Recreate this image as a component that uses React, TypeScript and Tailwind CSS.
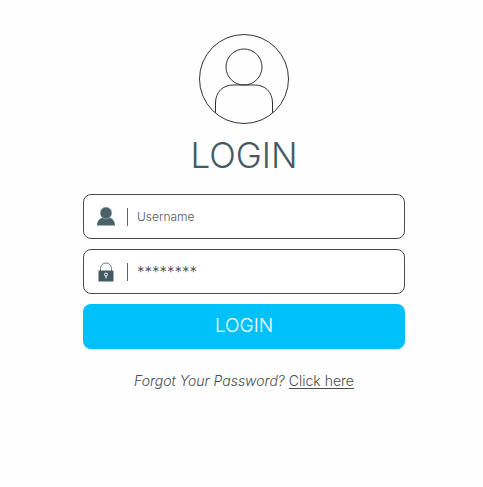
import React from "react";

function Avatar() {
  return (
    <svg width="90" height="90" viewBox="0 0 90 90" fill="none" stroke="#2f3338" strokeWidth="1" aria-hidden="true">
      <circle cx="45" cy="45" r="44.5" />
      <circle cx="45" cy="33" r="18" />
      <path d="M16.5 79V69C16.5 58 24 51 34 51H56C66 51 73.500 58 73.500 69V79" />
    </svg>
  );
}

function UserIcon() {
  return (
    <svg width="20" height="20" viewBox="0 0 20 20" aria-hidden="true">
      <path d="M1 18.500C1 14 4 10 10 10S19 14 19 18.500Z" fill="#4b626b" />
      <circle cx="10" cy="6" r="5.900" fill="#4b626b" stroke="#c3ccd0" strokeWidth="0.500" />
    </svg>
  );
}

function LockIcon() {
  return (
    <svg width="20" height="20" viewBox="0 0 20 20" aria-hidden="true">
      <path d="M4.500 9V6.500A5.500 5.500 0 0 1 15.500 6.500V9" fill="none" stroke="#6b7a80" strokeWidth="1" />
      <rect x="2.500" y="8.500" width="15" height="11" rx="0.500" fill="#435a63" />
      <circle cx="10" cy="12.500" r="1.500" fill="none" stroke="#fff" strokeWidth="1" />
      <path d="M10 14V16.500" stroke="#fff" strokeWidth="1" />
    </svg>
  );
}

type FieldProps = {
  id: string;
  label: string;
  type: string;
  placeholder: string;
  icon: React.ReactNode;
  inputClass: string;
};

function Field({ id, label, type, placeholder, icon, inputClass }: FieldProps) {
  return (
    <div className="flex h-[45px] items-center rounded-lg border border-[#4a4d50] bg-white pl-3">
      <label htmlFor={id} aria-label={label} className="shrink-0">
        {icon}
      </label>
      <span className="ml-[11px] h-[18px] w-px shrink-0 bg-[#5f6368]" />
      <input
        id={id}
        type={type}
        placeholder={placeholder}
        className={"ml-[9px] h-full min-w-0 flex-1 bg-transparent outline-none " + inputClass}
      />
    </div>
  );
}

export default function App() {
  return (
    <main className="flex min-h-screen flex-col items-center bg-[#fefefe] pt-[34px] pr-4 pl-[21px] font-['Inter',sans-serif]">
      <Avatar />
      <h1 className="mt-[11px] text-[35px] leading-10 font-light text-[#455a64]">LOGIN</h1>
      <form className="mt-[19px] flex w-full max-w-[322px] flex-col gap-[10px]" onSubmit={(e) => e.preventDefault()}>
        <Field
          id="username"
          label="Username"
          type="text"
          placeholder="Username"
          icon={<UserIcon />}
          inputClass="text-[12px] font-light text-[#55585c] placeholder:text-[#55585c]"
        />
        <Field
          id="password"
          label="Password"
          type="password"
          placeholder="********"
          icon={<LockIcon />}
          inputClass="text-[15px] font-light text-[#4a4d50] placeholder:text-[#4a4d50]"
        />
        <button type="submit" className="h-[45px] rounded-lg bg-[#00c0fa] text-[19px] font-light text-white">
          LOGIN
        </button>
      </form>
      <p className="mt-[22px] text-[14px] leading-5 font-light text-[#4a4d50]">
        <em>Forgot Your Password?</em>{" "}
        <a href="#" className="underline underline-offset-2">
          Click here
        </a>
      </p>
    </main>
  );
}
